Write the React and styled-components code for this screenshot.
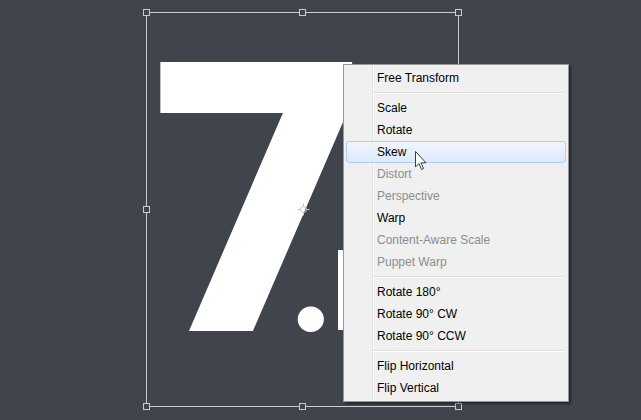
import React from "react";
import styled, { createGlobalStyle } from "styled-components";

const GlobalStyle = createGlobalStyle`
  html, body {
    margin: 0;
    padding: 0;
    background: #40454d;
  }
  #root {
    width: 641px;
    height: 420px;
  }
`;

const Stage = styled.div`
  position: relative;
  width: 641px;
  height: 420px;
  overflow: hidden;
  background: #40454d;
  font-family: "Liberation Sans", Arial, sans-serif;
`;

// the layer content being transformed
const Glyphs = styled.div`
  position: absolute;
  left: ${(p) => p.x}px;
  top: ${(p) => p.y}px;
  display: flex;
  align-items: baseline;
  color: #ffffff;
  line-height: 1;
  white-space: nowrap;
`;

const Seven = styled.span`
  display: inline-block;
  font-family: "DejaVu Sans", sans-serif;
  font-weight: 700;
  font-size: 369px;
  transform: scaleX(0.946);
  transform-origin: left bottom;
`;

const Dot = styled.span`
  margin-left: -102px;
  font-family: "Lato", sans-serif;
  font-weight: 900;
  font-size: 160px;
`;

const Stroke = styled.div`
  position: absolute;
  left: 338px;
  top: 250px;
  width: 5px;
  height: 80px;
  background: #ffffff;
`;

const BoundingBox = styled.div`
  position: absolute;
  left: 146px;
  top: 12px;
  width: 311px;
  height: 393px;
  border: 1px solid #c9cacb;
`;

const Handle = styled.div`
  position: absolute;
  left: ${(p) => p.x - 3}px;
  top: ${(p) => p.y - 3}px;
  width: 5px;
  height: 5px;
  border: 1px solid #c9cacb;
  background: #40454d;
`;

const Pivot = styled.svg`
  position: absolute;
  left: 297px;
  top: 203px;
`;

const Menu = styled.ul`
  position: absolute;
  left: 343px;
  top: 64px;
  width: 224px;
  margin: 0;
  padding: 2px 0;
  list-style: none;
  background: #f0f0f0;
  border: 1px solid #979797;
  box-shadow: 2px 2px 2px rgba(0, 0, 0, 0.45);
  font-size: 12px;

  &::before {
    content: "";
    position: absolute;
    top: 0;
    bottom: 0;
    left: 28px;
    width: 1px;
    background: #e2e3e3;
    box-shadow: 1px 0 0 #ffffff;
  }
`;

const Item = styled.li`
  position: relative;
  height: 20px;
  line-height: 20px;
  margin: 0 2px;
  padding-left: 30px;
  border: 1px solid ${(p) => (p.$active ? "#afd0f6" : "transparent")};
  border-radius: 3px;
  color: ${(p) => (p.$disabled ? "#8d8d8d" : "#000000")};
  background: ${(p) =>
    p.$active ? "linear-gradient(#f1f6fd, #dde9f9)" : "transparent"};
`;

const Separator = styled.li`
  position: relative;
  height: 8px;

  &::after {
    content: "";
    position: absolute;
    left: 29px;
    right: 3px;
    top: 3px;
    height: 1px;
    background: #e0e0e0;
    box-shadow: 0 1px 0 #ffffff;
  }
`;

const Cursor = styled.svg`
  position: absolute;
  left: 415px;
  top: 151px;
`;

const groups = [
  [{ label: "Free Transform" }],
  [
    { label: "Scale" },
    { label: "Rotate" },
    { label: "Skew", active: true },
    { label: "Distort", disabled: true },
    { label: "Perspective", disabled: true },
    { label: "Warp" },
    { label: "Content-Aware Scale", disabled: true },
    { label: "Puppet Warp", disabled: true },
  ],
  [
    { label: "Rotate 180°" },
    { label: "Rotate 90° CW" },
    { label: "Rotate 90° CCW" },
  ],
  [{ label: "Flip Horizontal" }, { label: "Flip Vertical" }],
];

const handles = [
  [146, 12],
  [302, 12],
  [458, 12],
  [146, 209],
  [458, 209],
  [146, 406],
  [302, 406],
  [458, 406],
];

export default function App() {
  return (
    <Stage>
      <GlobalStyle />
      <Glyphs x={137} y={19}>
        <Seven>7</Seven>
        <Dot>.</Dot>
      </Glyphs>
      <Stroke />
      <BoundingBox />
      {handles.map(([x, y], i) => (
        <Handle key={i} x={x} y={y} />
      ))}
      <Pivot width="13" height="13" viewBox="0 0 13 13">
        <circle cx="6.5" cy="6.5" r="3" fill="none" stroke="#c4c6c9" strokeWidth="1" />
        <path d="M6.5 0.5v3M6.5 9.5v3M0.5 6.5h3M9.5 6.5h3" stroke="#c4c6c9" strokeWidth="1" />
      </Pivot>
      <Menu>
        {groups.map((group, gi) => (
          <React.Fragment key={gi}>
            {gi > 0 && <Separator />}
            {group.map((it) => (
              <Item key={it.label} $active={it.active} $disabled={it.disabled}>
                {it.label}
              </Item>
            ))}
          </React.Fragment>
        ))}
      </Menu>
      <Cursor width="13" height="20" viewBox="0 0 13 20">
        <path
          d="M0.5 0.5 L0.5 16 L4 12.5 L6.5 18.5 L8.5 17.5 L6 11.8 L11 11.8 Z"
          fill="#ffffff"
          stroke="#3a3d44"
          strokeWidth="1"
          strokeLinejoin="round"
        />
      </Cursor>
    </Stage>
  );
}
